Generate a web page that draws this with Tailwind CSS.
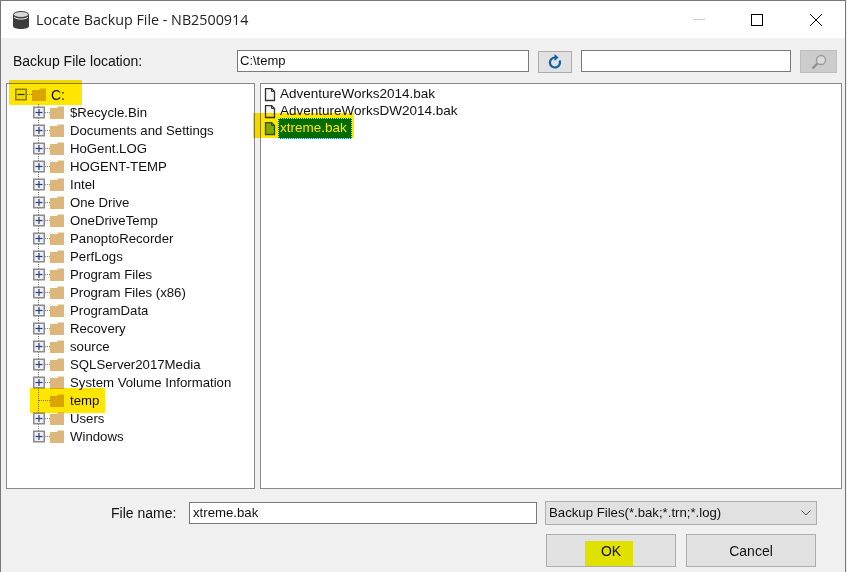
<!DOCTYPE html>
<html lang="en">
<head>
  <meta charset="UTF-8" />
  <title>Locate Backup File</title>
  <script src="https://cdn.jsdelivr.net/npm/@tailwindcss/browser@4"></script>
</head>
<body class="relative w-[847px] h-[572px] overflow-hidden bg-[#f0f0f0] font-['Liberation_Sans',sans-serif] text-[13px] text-[#111]">

  <!-- window frame -->
  <div class="flex flex-col h-[572px] w-[846px] border-t border-l border-r border-[#777]">

    <!-- title bar -->
    <div class="flex items-center h-[37px] bg-white shrink-0">
      <svg class="ml-[12px]" width="16" height="18" viewBox="0 0 16 18">
        <path d="M0 3.500V15c0 1.800 3.500 3 8 3s8-1.200 8-3V3.500z" fill="#3c3c3c"/>
        <ellipse cx="8" cy="3.500" rx="7.500" ry="3" fill="#d8d8d8" stroke="#3c3c3c"/>
        <path d="M1 5.500c1.500 1.400 4 2 7 2s5.500-.6 7-2v1c-1.500 1.400-4 2-7 2s-5.500-.6-7-2z" fill="#f4f4f4"/>
      </svg>
      <span class="ml-[7px] font-['Open_Sans',sans-serif] text-[14.300px] text-[#222] whitespace-nowrap">Locate Backup File - NB2500914</span>
      <div class="ml-auto flex items-center">
        <div class="w-[12px] h-px bg-[#ccc] mr-[46px]"></div>
        <div class="w-[12px] h-[12px] border border-black mr-[47px]"></div>
        <svg class="mr-[23px]" width="12" height="12" viewBox="0 0 12 12"><path d="M0 0l12 12M12 0L0 12" stroke="#000" fill="none"/></svg>
      </div>
    </div>

    <!-- location row -->
    <div class="flex items-center h-[45px] shrink-0 pt-[1px]">
      <span class="ml-[12px] w-[224px] text-[14px]">Backup File location:</span>
      <div class="w-[292px] h-[22px] bg-white border border-[#7a7a7a] flex items-center pl-[2px] text-[13px]">C:\temp</div>
      <button class="ml-[9px] w-[34px] h-[22px] bg-[#e1e1e1] border border-[#adadad] flex items-center justify-center mt-[1px]">
        <svg width="14" height="15" viewBox="0 0 14 15"><path d="M11.500 6.500A5 5 0 1 1 7 3.500" fill="none" stroke="#0f5ea8" stroke-width="2.200"/><path d="M6.500 0v7l4-3.500z" fill="#0f5ea8"/></svg>
      </button>
      <div class="ml-[9px] w-[210px] h-[22px] bg-white border border-[#7a7a7a]"></div>
      <button class="ml-[9px] w-[37px] h-[23px] bg-[#cccccc] border border-[#bfbfbf] flex items-center justify-center mt-[1px]">
        <svg width="16" height="16" viewBox="0 0 16 16"><circle cx="10" cy="6" r="4.500" fill="#dcdcdc" stroke="#999" stroke-width="1.300"/><path d="M6.500 9.500L1.500 14.500" stroke="#8f8f8f" stroke-width="2.400"/></svg>
      </button>
    </div>

    <!-- panels -->
    <div class="flex h-[406px] shrink-0 pl-[5px]">
      <div id="tree" class="w-[249px] h-full bg-white border border-[#8a8a8a] pt-[2px] pl-[8px]"></div>
      <div id="files" class="ml-[5px] w-[582px] h-full bg-white border border-[#8a8a8a] pt-[2px] pl-[3px]"></div>
    </div>

    <!-- file name row -->
    <div class="flex items-center h-[32px] mt-[8px] shrink-0">
      <span class="ml-[110px] w-[78px] text-[14px]">File name:</span>
      <div class="w-[348px] h-[22px] bg-white border border-[#7a7a7a] flex items-center pl-[3px] text-[13.200px]">xtreme.bak</div>
      <div class="ml-[8px] w-[272px] h-[24px] bg-[#e1e1e1] border border-[#adadad] flex items-center pl-[3px] text-[13.200px]">
        <span>Backup Files(*.bak;*.trn;*.log)</span>
        <svg class="ml-auto mr-[5px]" width="10" height="6" viewBox="0 0 10 6"><path d="M.5.500L5 5 9.500.500" fill="none" stroke="#555"/></svg>
      </div>
    </div>

    <!-- buttons -->
    <div class="flex mt-[5px] pl-[545px] gap-[10px]">
      <button class="w-[130px] h-[33px] pt-[2px] bg-[#e1e1e1] border border-[#adadad] text-[14px]">OK</button>
      <button class="w-[130px] h-[33px] pt-[2px] bg-[#e1e1e1] border border-[#adadad] text-[14px]">Cancel</button>
    </div>
  </div>

  <!-- marker highlights drawn over the dialog -->
  <div class="absolute left-[9px] top-[80px] w-[73px] h-[25px] bg-[#ffe600] mix-blend-multiply"></div>
  <div class="absolute left-[30px] top-[388px] w-[75px] h-[25px] bg-[#ffe600] mix-blend-multiply"></div>
  <div class="absolute left-[253px] top-[113px] w-[101px] h-[25px] bg-[#ffe600] mix-blend-multiply"></div>
  <div class="absolute left-[585px] top-[541px] w-[48px] h-[25px] bg-[#ffff00] mix-blend-multiply"></div>

  <script>
    const folders = ["$Recycle.Bin", "Documents and Settings", "HoGent.LOG", "HOGENT-TEMP", "Intel", "One Drive", "OneDriveTemp", "PanoptoRecorder", "PerfLogs", "Program Files", "Program Files (x86)", "ProgramData", "Recovery", "source", "SQLServer2017Media", "System Volume Information", "temp", "Users", "Windows"];

    const folderPath = (x) => `<path d="M${x} 4h7l1-1.500h6V15H${x}z" fill="#dcb67a"/>`;

    const box = (x, plus) => `
      <rect x="${x + 0.75}" y="3.250" width="10.500" height="10.500" fill="#efefef" stroke="#8c8c8c" stroke-width="1.500"/>
      <path d="M${x + 2.5} 8.500h7" stroke="#24408a" stroke-width="1.200"/>
      ${plus ? `<path d="M${x + 6} 5v7" stroke="#24408a" stroke-width="1.200"/>` : ""}`;

    const tree = document.getElementById("tree");
    let html = `<div class="flex items-center h-[18px]">
      <svg width="36" height="18" viewBox="0 0 36 18">
        ${box(0, false)}
        <path d="M12 8.500h5" stroke="#888" stroke-dasharray="1 1"/>
        ${folderPath(17)}
      </svg>
      <span class="text-[14px]">C:</span>
    </div>`;
    folders.forEach((name, i) => {
      const leaf = name === "temp";
      const last = i === folders.length - 1;
      html += `<div class="flex items-center h-[18px] pl-[18px] whitespace-nowrap">
        <svg width="37" height="18" viewBox="0 0 37 18" class="shrink-0">
          <path d="M5.500 0V${last ? 9 : 18}" stroke="#777" stroke-dasharray="1 1"/>
          ${leaf ? `<path d="M6 8.500h11" stroke="#777" stroke-dasharray="1 1"/>` : box(0, true) + `<path d="M12 8.500h5" stroke="#888" stroke-dasharray="1 1"/>`}
          ${folderPath(17)}
        </svg>
        <span class="text-[13.200px]">${name}</span>
      </div>`;
    });
    tree.innerHTML = html;

    const page = (fill, line) => `<svg width="12" height="14" viewBox="0 0 12 14" class="shrink-0">
      <path d="M1.500 .5h6l3 3v9h-9z" fill="${fill}" stroke="${line}" stroke-width="1.300"/><path d="M7.500 .5v3h3" fill="none" stroke="${line}"/></svg>`;

    document.getElementById("files").innerHTML = `
      <div class="flex items-center h-[17px]">${page("#f6f6f6", "#333")}<span class="ml-[4px] text-[13.500px]">AdventureWorks2014.bak</span></div>
      <div class="flex items-center h-[17px]">${page("#f6f6f6", "#333")}<span class="ml-[4px] text-[13.500px]">AdventureWorksDW2014.bak</span></div>
      <div class="flex items-center h-[17px]">${page("#86bc00", "#2c5a00")}<span class="ml-[2px] pl-[2px] pr-[5px] bg-[#0078d7] text-white text-[13.500px] outline-1 outline-dotted outline-white -outline-offset-1">xtreme.bak</span></div>`;
  </script>
</body>
</html>
